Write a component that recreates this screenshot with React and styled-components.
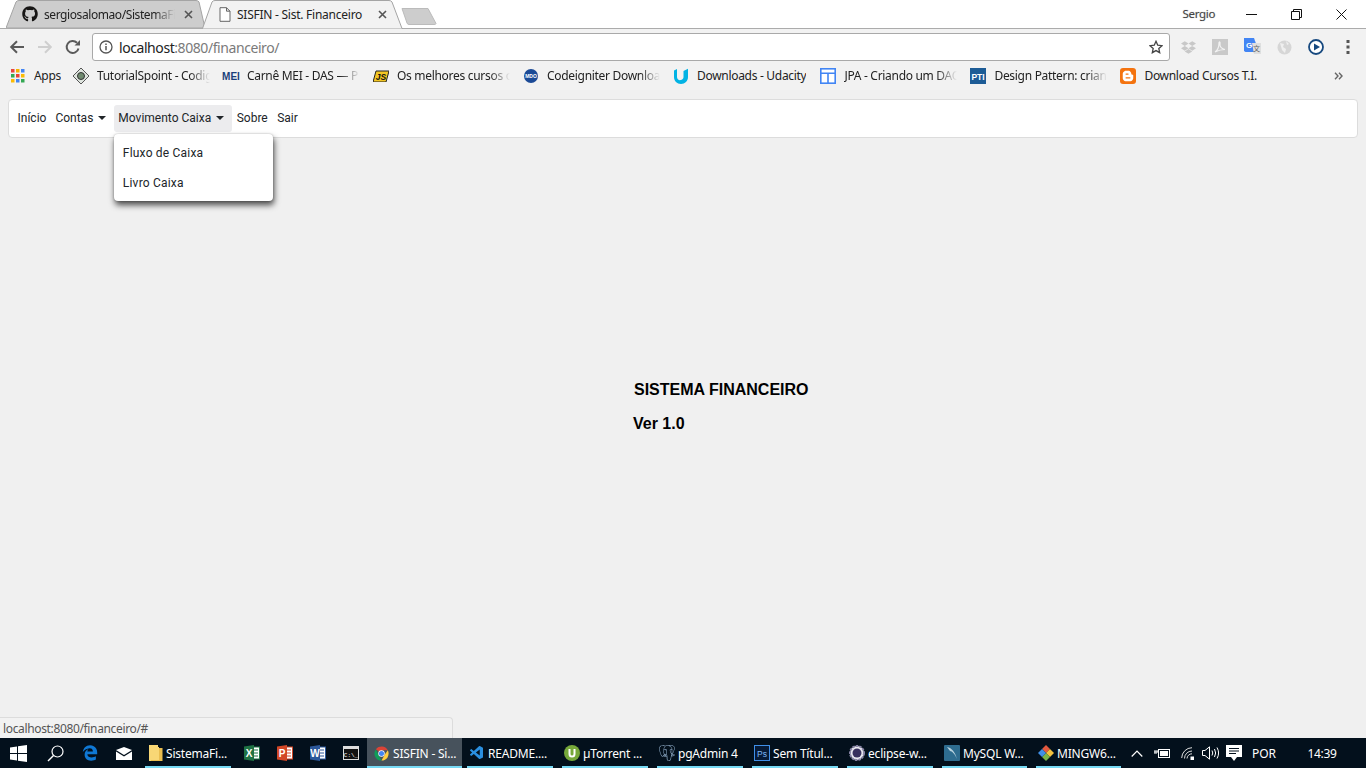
import React from 'react';
import styled, { createGlobalStyle } from 'styled-components';
import { FaGithub, FaDropbox, FaBloggerB } from 'react-icons/fa';
import { FaEdgeLegacy } from 'react-icons/fa6';
import { VscVscode } from 'react-icons/vsc';
import { SiPostgresql } from 'react-icons/si';

const Global = createGlobalStyle`
  html, body { margin: 0; padding: 0; height: 768px; overflow: hidden; }
  body { font-family: "Noto Sans", sans-serif; }
`;

const uiFont = `"Noto Sans", "Open Sans", sans-serif`;
const pageFont = `"Roboto", "Liberation Sans", sans-serif`;

const Screen = styled.div`
  width: 1366px; height: 768px; display: flex; flex-direction: column; overflow: hidden; background: #f0f0f0;
`;

/* ---------- tab strip ---------- */
const TabStrip = styled.div`
  height: 28px; flex: none; background: #fff; display: flex; align-items: stretch;
  padding-left: 6px; position: relative;
`;
const Tab = styled.div`
  position: relative; box-sizing: border-box; flex: none; display: flex; align-items: center;
  width: ${p => p.$w}px; height: ${p => p.$active ? 29 : 28}px; padding-left: ${p => p.$pad}px; margin-right: -3px;
  z-index: ${p => p.$active ? 2 : 1};
`;
const TabShape = styled.svg`
  position: absolute; left: 0; top: 0; width: 100%; height: 100%;
`;
const TabIconBox = styled.span`
  position: relative; width: 16px; height: 16px; flex: none; display: flex; align-items: center; justify-content: center;
`;
const TabTitle = styled.span`
  position: relative; margin-left: ${p => p.$gap}px; width: ${p => p.$w}px; flex: none; font: 12px ${uiFont};
  letter-spacing: ${p => p.$fade ? -0.42 : -0.25}px; color: #222; white-space: nowrap; overflow: hidden;
  ${p => p.$fade && `mask-image: linear-gradient(90deg,#000 84%,transparent);`}
`;
const TabClose = styled.svg`
  position: relative; flex: none; width: 9px; height: 9px; margin-left: ${p => p.$gap}px;
`;
const NewTab = styled.svg`
  flex: none; width: 36px; height: 18px; margin: 7px 0 0 1px; position: relative; z-index: 0;
`;
const WindowArea = styled.div`
  margin-left: auto; display: flex; align-items: center; height: 28px; padding-right: 2.5px;
`;
const UserName = styled.span`
  font: 11.5px ${uiFont}; letter-spacing: -0.3px; color: #444; width: 46px; margin-bottom: 1px;
  text-shadow: 0 0 2px #fff, 0 0 1px #999;
`;
const WinBtn = styled.span`
  width: 45px; height: 28px; display: flex; align-items: center; justify-content: center;
`;

/* ---------- toolbar ---------- */
const Toolbar = styled.div`
  height: 34px; flex: none; box-sizing: border-box; background: #f2f2f2; border-top: 1px solid #ababab;
  display: flex; align-items: center; padding: 3px 0 0 9px;
`;
const NavBtn = styled.span`
  width: 28px; height: 16px; flex: none; display: flex; align-items: center;
`;
const Omnibox = styled.div`
  margin-left: -1px; width: 1078px; height: 28px; box-sizing: border-box; flex: none; background: #fff;
  border: 1px solid #a9a9a9; border-radius: 3px; display: flex; align-items: center; padding: 0 6px 0 6px;
`;
const UrlHost = styled.span`
  margin-left: 6px; font: 14px ${uiFont}; letter-spacing: -0.43px; color: #222; white-space: nowrap;
`;
const UrlRest = styled.span`color: #7a7a7a;`;
const Star = styled.svg`margin-left: auto; width: 14px; height: 14px; flex: none;`;
const Extensions = styled.div`
  display: flex; align-items: center; margin-left: 2px;
`;
const Ext = styled.span`
  width: 32px; height: 18px; display: flex; align-items: center; justify-content: center; flex: none;
`;

/* ---------- bookmarks ---------- */
const BookmarkBar = styled.div`
  height: 28px; flex: none; background: #f2f2f2; display: flex; align-items: center;
  padding: 0 0 1px 10px; box-sizing: border-box; position: relative;
`;
const Bookmark = styled.span`
  display: flex; align-items: center; flex: none; margin-right: ${p => p.$mr ?? 13}px;
`;
const BookmarkIcon = styled.span`
  width: 16px; height: 16px; flex: none; display: flex; align-items: center; justify-content: center;
`;
const BookmarkLabel = styled.span`
  margin-left: 8px; font: 12px ${uiFont}; letter-spacing: -0.3px; color: #222; white-space: nowrap; overflow: hidden;
  max-width: 113px;
  ${p => p.$fade && `width:113px; mask-image: linear-gradient(90deg,#000 82%,transparent);`}
`;
const Chevrons = styled.svg`
  position: absolute; left: 1334px; top: 10px; width: 9px; height: 8px;
`;

/* ---------- page ---------- */
const Page = styled.main`
  flex: 1; position: relative; background: #f0f0f0; padding: 9px 8px 0; min-height: 0; font-family: ${pageFont};
`;
const Navbar = styled.nav`
  height: 39px; box-sizing: border-box; background: #fff; border: 1px solid #dcdcdc; border-radius: 4px;
  display: flex; align-items: center; padding: 0 4px;
`;
const NavItem = styled.div`
  position: relative; height: 27px; box-sizing: border-box; padding: 0 4.5px 2px; margin-left: ${p => p.$ml || 0}px;
  display: flex; align-items: center;
  font-size: 12px; color: #212529; border-radius: 3px; white-space: nowrap;
  background: ${p => p.$open ? '#ececee' : 'transparent'};
`;
const Caret = styled.span`
  width: 0; height: 0; margin: 0 3px 0 5px; border-top: 4px solid #212529;
  border-left: 4px solid transparent; border-right: 4px solid transparent;
`;
const Dropdown = styled.div`
  position: absolute; left: 0; top: 29px; width: 159px; height: 67px; box-sizing: border-box; padding: 4px 0 0; background: #fff;
  border-radius: 4px; box-shadow: 1px 4px 6px rgba(0,0,0,.7), 0 0 2px rgba(0,0,0,.25);
  z-index: 5;
`;
const DropdownItem = styled.div`
  height: 30px; display: flex; align-items: center; padding-left: 9px; font-size: 12px; letter-spacing: .2px; color: #212529;
`;
const Hero = styled.section`
  margin: 240px 0 0 625px;
`;
const HeroTitle = styled.h1`
  margin: 0 0 0 1px; font: 700 16px/24px "Liberation Sans", sans-serif; color: #000;
`;
const HeroVersion = styled.h2`
  margin: 10px 0 0; font: 700 16px/24px "Liberation Sans", sans-serif; color: #000;
`;
const StatusBubble = styled.div`
  position: absolute; left: 0; bottom: 0; width: 453px; height: 21px; box-sizing: border-box; background: #f2f2f2;
  border: 1px solid #dcdcdc; border-left: none; border-bottom: none; border-top-right-radius: 4px;
  font: 12px/21px ${uiFont}; letter-spacing: -0.35px; color: #555; padding-left: 3px;
`;

/* ---------- taskbar ---------- */
const Taskbar = styled.footer`
  height: 30px; flex: none; background: #03101c; display: flex; align-items: stretch; position: relative;
`;
const Slot = styled.span`
  width: ${p => p.$w}px; flex: none; display: flex; align-items: center; justify-content: center;
`;
const TaskItem = styled.div`
  position: relative; width: ${p => p.$w || 95}px; flex: none; display: flex; align-items: center; box-sizing: border-box;
  padding-left: ${p => p.$pad ?? 7}px;
  background: ${p => p.$active ? '#47525c' : 'transparent'};
  &::after {
    content: ''; position: absolute; bottom: 0; height: 2px; background: #76d9f4;
    left: ${p => p.$active ? 0 : 4.5}px; right: ${p => p.$active ? 0 : 4.5}px;
  }
`;
const TaskIcon = styled.span`
  width: 16px; height: 16px; flex: none; display: flex; align-items: center; justify-content: center;
`;
const TaskLabel = styled.span`
  margin-left: ${p => p.$gap ?? 3}px; font: 12px ${uiFont}; letter-spacing: -0.2px; color: #fff; white-space: nowrap;
`;
const TrayText = styled.span`
  font: 12px ${uiFont}; color: #fff; letter-spacing: ${p => p.$ls ?? 0}px;
`;
const BloggerBadge = styled.span`
  width: 16px; height: 16px; border-radius: 3px; background: #f4730f; display: flex; align-items: center; justify-content: center;
`;
const MeiIcon = styled.svg`
  width: 18px; height: 12px; flex: none;
`;

/* ---------- drawn icons ---------- */
const CloseX = ({ gap }) => (
  <TabClose $gap={gap} viewBox="0 0 9 9"><path d="M1 1l7 7M8 1l-7 7" stroke="#555" strokeWidth="1.6" /></TabClose>
);
const DocIcon = () => (
  <svg width="12" height="15" viewBox="0 0 12 15"><path d="M1 .7h6.5L11 4.2v10.1H1z M7.500 .7v3.500H11" fill="#fff" stroke="#666" strokeWidth="1" /></svg>
);
const Info = () => (
  <svg width="14" height="14" viewBox="0 0 14 14"><circle cx="7" cy="7" r="6" fill="none" stroke="#555" strokeWidth="1.300" /><path d="M7 6v4.200M7 3.500v1.400" stroke="#555" strokeWidth="1.500" /></svg>
);
const Arrow = ({ color, flip }) => (
  <svg width="16" height="14" viewBox="0 0 16 14" transform={flip ? 'scale(-1 1)' : undefined}>
    <path d="M15 7H2.500M8 1.200 2.200 7 8 12.800" fill="none" stroke={color} strokeWidth="2" />
  </svg>
);
const Reload = () => (
  <svg width="16" height="16" viewBox="0 0 16 16"><path d="M13.500 9.500A6 6 0 1 1 12 3.800" fill="none" stroke="#5a5a5a" strokeWidth="2" /><path d="M9.500 6.500H15V1z" fill="#5a5a5a" /></svg>
);
const GridApps = () => {
  const c = ['#e8453c', '#f4b400', '#4285f4', '#34a853', '#ea4335', '#fbbc05', '#fbbc05', '#4285f4', '#34a853'];
  return (
    <svg width="14" height="14" viewBox="0 0 14 14">
      {c.map((f, i) => <rect key={i} x={(i % 3) * 5} y={Math.floor(i / 3) * 5} width="3.500" height="3.500" fill={f} />)}
    </svg>
  );
};
const ChromeLogo = () => (
  <svg width="15" height="15" viewBox="0 0 16 16">
    <path d="M8 8 2 3.500A7.500 7.500 0 0 1 14.700 4.500H8z" fill="#db4437" />
    <path d="M2 3.500 5.500 11 8 15.500A7.500 7.500 0 0 1 2 3.500z" fill="#0f9d58" />
    <path d="M14.700 4.500A7.500 7.500 0 0 1 8 15.500L11.500 9z" fill="#ffcd40" />
    <circle cx="8" cy="8" r="3.400" fill="#fff" /><circle cx="8" cy="8" r="2.700" fill="#4285f4" />
  </svg>
);
const OfficeIcon = ({ color, letter }) => (
  <svg width="16" height="16" viewBox="0 0 16 16">
    <rect x="6" y="2" width="9.500" height="12" fill="#fff" stroke={color} />
    <path d="M8 5h6M8 8h6M8 11h6" stroke={color} />
    <path d="M0 1.500 10 0v16L0 14.500z" fill={color} />
    <text x="5" y="12" textAnchor="middle" fontFamily="Liberation Sans" fontWeight="700" fontSize="10" fill="#fff">{letter}</text>
  </svg>
);

const bookmarks = [
  { label: 'TutorialSpoint - Codig', fade: true, icon: <svg width="16" height="16" viewBox="0 0 16 16"><path d="M8 0l8 8-8 8-8-8z" fill="#dfe5df" stroke="#555" /><circle cx="8" cy="8" r="3.500" fill="#6f8a6f" stroke="#333" /></svg> },
  { label: 'Carnê MEI - DAS — P', fade: true, icon: <MeiIcon viewBox="0 0 18 12"><text x="9" y="10" textAnchor="middle" fontFamily="Liberation Sans" fontWeight="700" fontSize="10" fill="#1a3f7a">MEI</text></MeiIcon> },
  { label: 'Os melhores cursos o', fade: true, icon: <svg width="16" height="12" viewBox="0 0 16 12"><path d="M3 1h13l-3 11H0z" fill="#f3c623" stroke="#222" /><text x="8" y="9.500" textAnchor="middle" fontFamily="Liberation Sans" fontStyle="italic" fontWeight="700" fontSize="8.500" fill="#111">JS</text></svg> },
  { label: 'Codeigniter Downloa', fade: true, icon: <svg width="14" height="14" viewBox="0 0 14 14"><circle cx="7" cy="7" r="7" fill="#1b4a96" /><text x="7" y="9" textAnchor="middle" fontFamily="Liberation Sans" fontWeight="700" fontSize="5" fill="#fff">MDO</text></svg> },
  { label: 'Downloads - Udacity', mr: 14, icon: <svg width="16" height="16" viewBox="0 0 16 16"><path d="M1 2.500 4 1v8c0 2.500 2 3.500 4 3 1.800-.5 2.500-1.600 2.500-3V3L15 .8V9c0 4-3 7-7 7s-7-3-7-7z" fill="#02b3e4" /></svg> },
  { label: 'JPA - Criando um DAO', fade: true, icon: <svg width="16" height="16" viewBox="0 0 16 16"><rect x=".8" y=".8" width="14.400" height="14.400" fill="#fff" stroke="#4285f4" strokeWidth="1.600" /><path d="M1 5.300h14M8 5.300V15" stroke="#4285f4" strokeWidth="1.600" /></svg> },
  { label: 'Design Pattern: crianc', fade: true, icon: <svg width="16" height="16" viewBox="0 0 16 16"><rect width="16" height="16" fill="#1d5c96" /><text x="8" y="11.500" textAnchor="middle" fontFamily="Liberation Sans" fontWeight="700" fontSize="8.500" fill="#fff">PTI</text></svg> },
  { label: 'Download Cursos T.I.', icon: <BloggerBadge><FaBloggerB size={12} color="#fff" /></BloggerBadge> },
];

const tasks = [
  { label: 'README....', icon: <VscVscode size={16} color="#2a8fe0" /> },
  { label: 'µTorrent ...', icon: <svg width="16" height="16" viewBox="0 0 16 16"><circle cx="8" cy="8" r="8" fill="#76a83a" /><path d="M4.500 4v5a3.500 3.500 0 0 0 7 0V4H9.500v5a1.500 1.500 0 0 1-3 0V4z" fill="#fff" /></svg> },
  { label: 'pgAdmin 4', icon: <SiPostgresql size={16} color="#9dbbd8" /> },
  { label: 'Sem Títul...', icon: <svg width="16" height="16" viewBox="0 0 16 16"><rect x=".5" y=".5" width="15" height="15" fill="#061a36" stroke="#3f8fe8" /><text x="8" y="11.500" textAnchor="middle" fontFamily="Liberation Sans" fontSize="8.500" fill="#7fb8f5">Ps</text></svg> },
  { label: 'eclipse-w...', icon: <svg width="16" height="16" viewBox="0 0 16 16"><circle cx="8" cy="8" r="7" fill="#e9e9f0" stroke="#8a86a8" strokeDasharray="2.500 1" strokeWidth="2" /><circle cx="8" cy="8" r="4.500" fill="#37305e" /></svg> },
  { label: 'MySQL W...', w: 94, icon: <svg width="16" height="16" viewBox="0 0 16 16"><rect width="16" height="16" rx="1" fill="#2e6c8f" /><path d="M3 2c5 1 8 5 10 12-2-5-5-8-7-8L3 2z" fill="#b9d3df" /></svg> },
  { label: 'MINGW6...', w: 94, icon: <svg width="16" height="16" viewBox="0 0 16 16"><path d="M8 0l4 4-4 4-4-4z" fill="#e2583e" /><path d="M12 4l4 4-4 4-4-4z" fill="#f4c13d" /><path d="M8 8l4 4-4 4-4-4z" fill="#7ab648" /><path d="M4 4l4 4-4 4-4-4z" fill="#3f8fe8" /></svg> },
];

export default function App() {
  return (
    <Screen>
      <Global />
      <TabStrip>
        <Tab $w={199} $pad={16}>
          <TabShape viewBox="0 0 199 28" preserveAspectRatio="none"><path d="M0 28 10 2Q11 .5 13 .5H190Q192 .5 193 2L199 28z" fill="#cdcdcd" stroke="#a4a4a4" /></TabShape>
          <TabIconBox><FaGithub size={16} color="#161514" /></TabIconBox>
          <TabTitle $gap={6} $w={131} $fade>sergiosalomao/SistemaFi</TabTitle>
          <CloseX gap={9} />
        </Tab>
        <Tab $active $w={201} $pad={15}>
          <TabShape viewBox="0 0 201 29" preserveAspectRatio="none"><path d="M0 28.500H.5L10 2Q11 .5 13 .5H187Q189 .5 190 2L200 28.500H201V29H0z" fill="#f2f2f2" stroke="#a4a4a4" strokeWidth="1" /></TabShape>
          <TabIconBox><DocIcon /></TabIconBox>
          <TabTitle $gap={4} $w={128}>SISFIN - Sist. Financeiro</TabTitle>
          <CloseX gap={13} />
        </Tab>
        <NewTab viewBox="0 0 36 18"><path d="M1 1.500H27L35 16.500Q35 17.500 33 17.500H8Q6.500 17.500 6 16z" fill="#cdcdcd" stroke="#bbb" /></NewTab>
        <WindowArea>
          <UserName>Sergio</UserName>
          <WinBtn><svg width="11" height="1" viewBox="0 0 11 1"><rect width="11" height="1" fill="#111" /></svg></WinBtn>
          <WinBtn><svg width="11" height="11" viewBox="0 0 11 11"><path d="M.5 2.500h8v8h-8zM2.500 2.500v-2h8v8h-2" fill="none" stroke="#111" /></svg></WinBtn>
          <WinBtn><svg width="11" height="11" viewBox="0 0 11 11"><path d="M.5.5l10 10M10.500.5l-10 10" stroke="#111" /></svg></WinBtn>
        </WindowArea>
      </TabStrip>

      <Toolbar>
        <NavBtn><Arrow color="#5a5a5a" /></NavBtn>
        <NavBtn><Arrow color="#cfcfcf" flip /></NavBtn>
        <NavBtn><Reload /></NavBtn>
        <Omnibox>
          <Info />
          <UrlHost>localhost<UrlRest>:8080/financeiro/</UrlRest></UrlHost>
          <Star viewBox="0 0 16 16"><path d="M8 1.500l2 4.500 4.800.5-3.600 3.200 1 4.800L8 12.100 3.800 14.500l1-4.800L1.200 6.500 6 6z" fill="none" stroke="#444" strokeWidth="1.500" /></Star>
        </Omnibox>
        <Extensions>
          <Ext><FaDropbox size={15} color="#c8c8c8" /></Ext>
          <Ext><svg width="16" height="16" viewBox="0 0 16 16"><rect width="16" height="16" fill="#c9c9c9" /><path d="M3 13c3-2 4-6 4-9 0-2 1.500-1 1 1-.5 3 2 5 5 5.500-3 0-7 1-10 2.500z" fill="none" stroke="#f2f2f2" strokeWidth="1.200" /></svg></Ext>
          <Ext><svg width="17" height="18" viewBox="0 0 17 18"><path d="M0 0h10l5 14H1.500L0 13z" fill="#4285f4" /><path d="M8 5h9v11H10z" fill="#dfdfdf" /><text x="5" y="10" textAnchor="middle" fontFamily="Liberation Sans" fontWeight="700" fontSize="8" fill="#fff">G</text><text x="12.500" y="13" textAnchor="middle" fontFamily="Noto Sans CJK SC" fontSize="7" fill="#666">文</text></svg></Ext>
          <Ext><svg width="15" height="15" viewBox="0 0 15 15"><circle cx="7.500" cy="7.500" r="7" fill="#d6d6d6" /><path d="M3 3l4 1-1 3 3 2-1 4-3-3zM9 1l3 3-2 1z" fill="#efefef" /></svg></Ext>
          <Ext><svg width="16" height="16" viewBox="0 0 16 16"><circle cx="8" cy="8" r="7" fill="#fff" stroke="#17497f" strokeWidth="1.800" /><path d="M6 4.500v7L12 8z" fill="#17497f" /></svg></Ext>
          <Ext><svg width="4" height="14" viewBox="0 0 4 14"><g fill="#555"><rect x=".5" y="0" width="3" height="3" /><rect x=".5" y="5.500" width="3" height="3" /><rect x=".5" y="11" width="3" height="3" /></g></svg></Ext>
        </Extensions>
      </Toolbar>

      <BookmarkBar>
        <Bookmark $mr={12}>
          <BookmarkIcon><GridApps /></BookmarkIcon>
          <BookmarkLabel>Apps</BookmarkLabel>
        </Bookmark>
        {bookmarks.map(b => (
          <Bookmark key={b.label} $mr={b.mr}>
            <BookmarkIcon>{b.icon}</BookmarkIcon>
            <BookmarkLabel $fade={b.fade}>{b.label}</BookmarkLabel>
          </Bookmark>
        ))}
        <Chevrons viewBox="0 0 9 8"><path d="M1 .8 4 4 1 7.200M5 .8 8 4 5 7.200" fill="none" stroke="#666" strokeWidth="1.400" /></Chevrons>
      </BookmarkBar>

      <Page>
        <Navbar>
          <NavItem>Início</NavItem>
          <NavItem>Contas<Caret /></NavItem>
          <NavItem $open>
            Movimento Caixa<Caret />
            <Dropdown>
              <DropdownItem>Fluxo de Caixa</DropdownItem>
              <DropdownItem>Livro Caixa</DropdownItem>
            </Dropdown>
          </NavItem>
          <NavItem $ml={0.5}>Sobre</NavItem>
          <NavItem $ml={0.5}>Sair</NavItem>
        </Navbar>
        <Hero>
          <HeroTitle>SISTEMA FINANCEIRO</HeroTitle>
          <HeroVersion>Ver 1.0</HeroVersion>
        </Hero>
        <StatusBubble>localhost:8080/financeiro/#</StatusBubble>
      </Page>

      <Taskbar>
        <Slot $w={37}><svg width="17" height="17" viewBox="0 0 17 17"><path d="M0 2.500 7 1.500v6.500H0zM8 1.300 17 0v8H8zM0 9h7v6.500l-7-1zM8 9h9v8l-9-1.300z" fill="#fff" /></svg></Slot>
        <Slot $w={36}><svg width="17" height="17" viewBox="0 0 17 17"><circle cx="10.500" cy="6.500" r="5.500" fill="none" stroke="#fff" strokeWidth="1.200" /><path d="M6.500 10.500 1 16" stroke="#fff" strokeWidth="1.500" /></svg></Slot>
        <Slot $w={34}><FaEdgeLegacy size={16} color="#0f78d4" /></Slot>
        <Slot $w={33}><svg width="16" height="13" viewBox="0 0 16 13"><path d="M0 3 8 0l8 3-8 5z" fill="#fff" /><path d="M0 4.500 8 9.500l8-5V13H0z" fill="#fff" /></svg></Slot>
        <TaskItem $pad={8}>
          <TaskIcon><svg width="14" height="16" viewBox="0 0 14 16"><path d="M0 0h9v2h1v14H0z" fill="#f8d775" /><path d="M10 3h3.500v13H2v-1h8z" fill="#e9bd4f" /></svg></TaskIcon>
          <TaskLabel $gap={2}>SistemaFi...</TaskLabel>
        </TaskItem>
        <Slot $w={33}><OfficeIcon color="#1f7244" letter="X" /></Slot>
        <Slot $w={33}><OfficeIcon color="#d24726" letter="P" /></Slot>
        <Slot $w={33}><OfficeIcon color="#2b579a" letter="W" /></Slot>
        <Slot $w={33}><svg width="16" height="14" viewBox="0 0 16 14"><rect x=".5" y=".5" width="15" height="13" fill="#111" stroke="#ddd" /><rect x="1" y="1" width="14" height="2" fill="#ddd" /><text x="8" y="10.500" textAnchor="middle" fontFamily="Liberation Mono" fontSize="6" fill="#fff">C:\_</text></svg></Slot>
        <TaskItem $active $pad={6}>
          <TaskIcon><ChromeLogo /></TaskIcon>
          <TaskLabel $gap={4}>SISFIN - Si...</TaskLabel>
        </TaskItem>
        {tasks.map(t => (
          <TaskItem key={t.label} $w={t.w}>
            <TaskIcon>{t.icon}</TaskIcon>
            <TaskLabel>{t.label}</TaskLabel>
          </TaskItem>
        ))}
        <Slot $w={24}><svg width="12" height="7" viewBox="0 0 12 7"><path d="M.7 6.500 6 1l5.300 5.500" fill="none" stroke="#fff" strokeWidth="1.200" /></svg></Slot>
        <Slot $w={26}><svg width="16" height="10" viewBox="0 0 16 10"><rect x="4.500" y="1.500" width="11" height="8" fill="none" stroke="#fff" /><rect x="6" y="3" width="8" height="5" fill="#fff" /><path d="M0 5h3M1 2v2M3 2v2M0 4h4" stroke="#fff" /></svg></Slot>
        <Slot $w={24}><svg width="13" height="13" viewBox="0 0 13 13"><path d="M.7 11A10.500 10.500 0 0 1 11 .7M3.500 11.500A7.500 7.500 0 0 1 11 4M6 11.500A5 5 0 0 1 11 6.800" fill="none" stroke="#ddd" /><rect x="9.500" y="9.500" width="3.500" height="3.500" fill="#fff" /></svg></Slot>
        <Slot $w={23}><svg width="17" height="14" viewBox="0 0 17 14"><path d="M.5 4.500H3L7.500.8v12.400L3 9.500H.5z" fill="none" stroke="#fff" /><path d="M10 4.500q1.500 2.500 0 5M12.500 3q2.300 4 0 8M15 1.500q3.200 5.500 0 11" fill="none" stroke="#fff" /></svg></Slot>
        <Slot $w={24}><svg width="16" height="16" viewBox="0 0 16 16"><path d="M0 0h16v12h-5l-3 4-3-4H0z" fill="#fff" /><path d="M3 3.500h10M3 6h10M3 8.500h7" stroke="#03101c" /></svg></Slot>
        <Slot $w={36}><TrayText>POR</TrayText></Slot>
        <Slot $w={80}><TrayText $ls={-0.3}>14:39</TrayText></Slot>
      </Taskbar>
    </Screen>
  );
}
